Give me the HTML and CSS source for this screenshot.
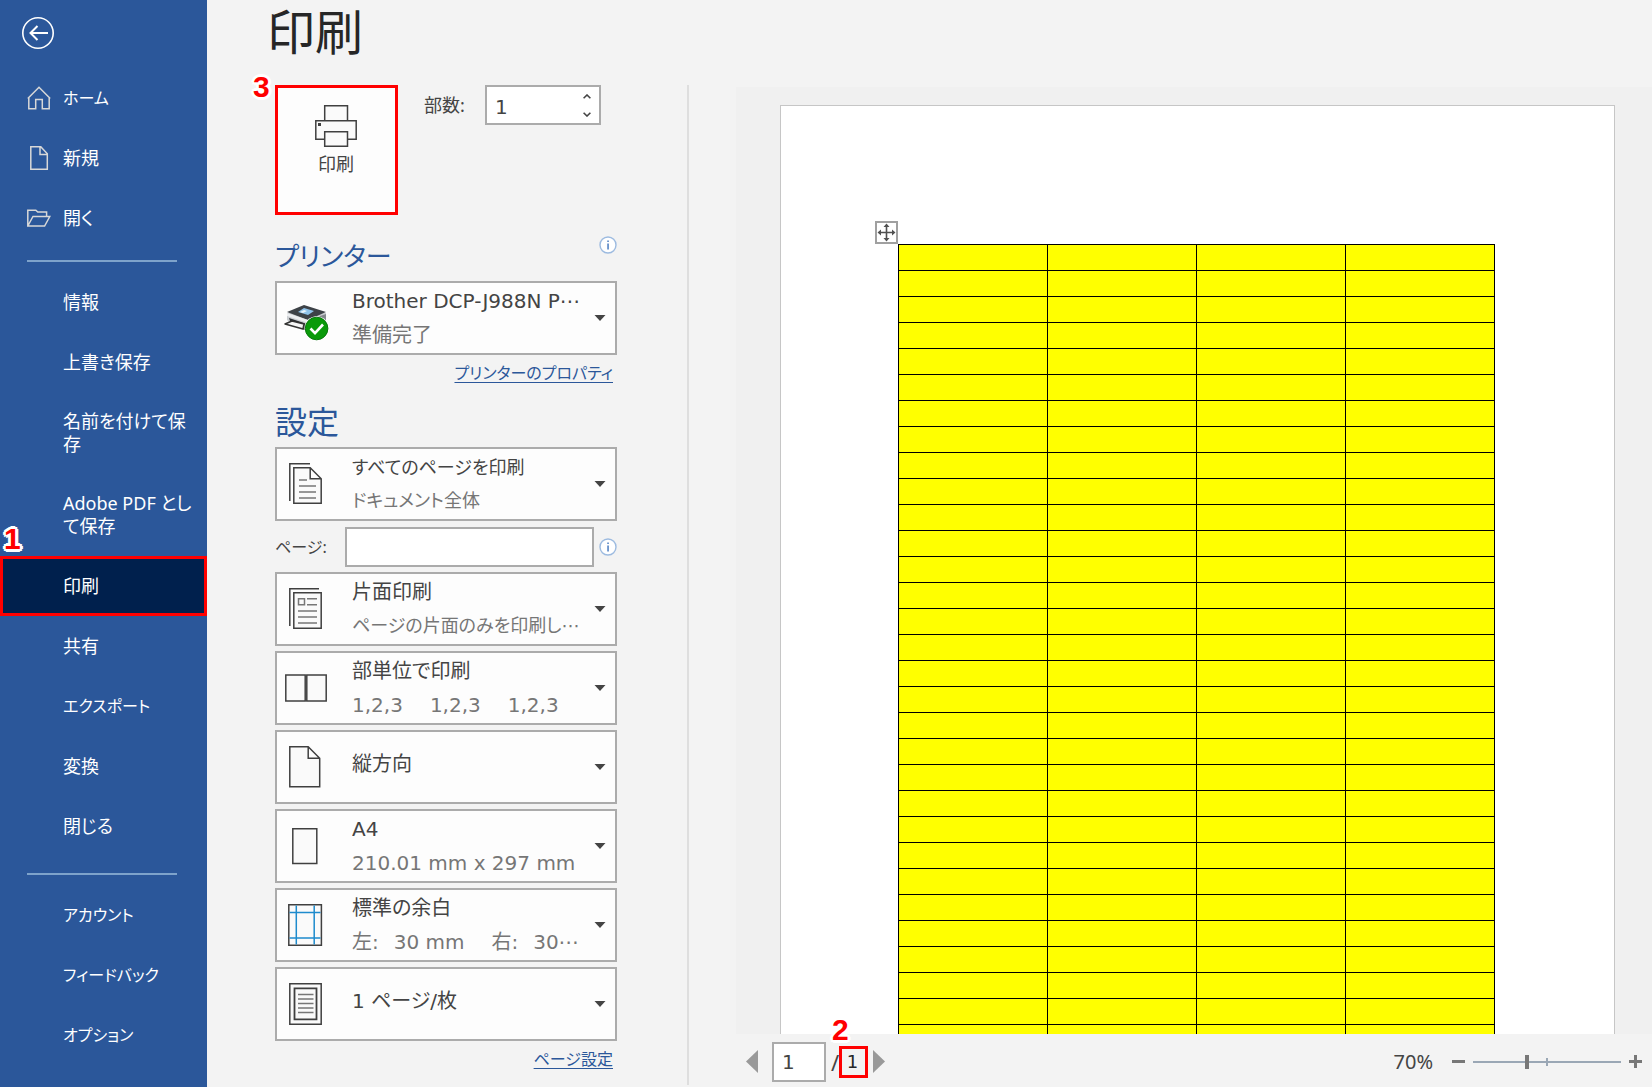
FILE: index.html
```html
<!DOCTYPE html>
<html lang="ja">
<head>
<meta charset="utf-8">
<title>印刷</title>
<meta name="viewport" content="width=device-width, initial-scale=1">
<link rel="stylesheet" href="styles.css">
</head>
<body class="backstage">
<nav class="sidebar" aria-label="ファイル">
  <button class="back" type="button" aria-label="戻る">
    <svg width="32" height="32" viewBox="0 0 32 32" fill="none" stroke="#fff"><circle cx="16" cy="16" r="15.2" stroke-width="1.6"/><path d="M26 16H8.500M15.500 9L8.500 16l7 7" stroke-width="2"/></svg>
  </button>
  <ul class="menu">
    <li><a class="item kana" href="#home"><svg class="item-icon" width="24" height="24" viewBox="0 0 24 24" fill="none" stroke="#d8d8d8" stroke-width="1.500"><path d="M.8 12.500L12 1.300l11.200 11.200M1.800 11.600v11.200h6.900v-9.300h6.600v9.300h6.900V11.600"/></svg>ホーム</a></li>
    <li><a class="item" href="#new"><svg class="item-icon" width="24" height="24" viewBox="0 0 24 24" fill="none" stroke="#d8d8d8" stroke-width="1.500"><path d="M3.800.8h10l6.500 7v15.400H3.800zM13 .8v7.700h7.300"/></svg>新規</a></li>
    <li><a class="item" href="#open"><svg class="item-icon" width="24" height="24" viewBox="0 0 24 24" fill="none" stroke="#d8d8d8" stroke-width="1.500"><path d="M.8 20V4.200h8l2 1.900h8.800v4.400M.8 20L6 10.500h16.800L17.600 20z"/></svg>開く</a></li>
  </ul>
  <hr class="rule">
  <ul class="menu">
    <li><a class="item" href="#info">情報</a></li>
    <li><a class="item" href="#save">上書き保存</a></li>
    <li><a class="item" href="#saveas">名前を付けて保<br>存</a></li>
    <li><a class="item" href="#pdf">Adobe PDF とし<br>て保存</a></li>
    <li class="marked"><a class="item item-current" href="#print" aria-current="page">印刷</a><span class="callout callout-1">1</span></li>
    <li><a class="item" href="#share">共有</a></li>
    <li><a class="item kana" href="#export">エクスポート</a></li>
    <li><a class="item" href="#convert">変換</a></li>
    <li><a class="item" href="#close">閉じる</a></li>
  </ul>
  <hr class="rule rule-low">
  <ul class="menu">
    <li><a class="item kana" href="#account">アカウント</a></li>
    <li><a class="item kana" href="#feedback">フィードバック</a></li>
    <li><a class="item kana" href="#options">オプション</a></li>
  </ul>
</nav>
<main class="content">
  <h1 class="title">印刷</h1>
  <div class="panes">
    <section class="settings">
      <div class="top">
        <div class="marked">
          <button class="print" type="button">
            <svg width="42" height="42" viewBox="0 0 42 42" fill="#fafafa" stroke="#404040" stroke-width="1.500"><path d="M9.700.8h22.800v15H9.700z"/><path d="M.8 15.800h40.400v18.400H.8z"/><path d="M9.700 26.700h22.800v14.500H9.700z"/><path d="M3 18h3v3H3z" fill="#404040" stroke="none"/></svg>
            <span>印刷</span>
          </button>
          <span class="callout callout-3">3</span>
        </div>
        <label class="label copies-label" for="copies">部数:</label>
        <div class="copies">
          <input id="copies" class="number" type="number" value="1" min="1">
          <div class="spin">
            <button class="step" type="button" aria-label="増やす"><svg width="8" height="5" viewBox="0 0 8 5" fill="none" stroke="#444" stroke-width="1.600"><path d="M.6 4.300L4 1l3.400 3.300"/></svg></button>
            <button class="step" type="button" aria-label="減らす"><svg width="8" height="5" viewBox="0 0 8 5" fill="none" stroke="#444" stroke-width="1.600"><path d="M.6.700L4 4 7.400.700"/></svg></button>
          </div>
        </div>
      </div>

      <div class="section-head">
        <h2 class="heading heading-kana">プリンター</h2>
        <svg class="info" width="18" height="18" viewBox="0 0 18 18"><circle cx="9" cy="9" r="8" fill="#fff" stroke="#9dbbe0" stroke-width="1.400"/><path d="M8.300 7.400h1.500v6H8.300zM8.300 4.500h1.500v1.500H8.300z" fill="#4a7cc0"/></svg>
      </div>
      <div class="combo">
        <select class="combo-select" aria-label="プリンター"><option>Brother DCP-J988N P⋯</option></select>
        <svg class="combo-icon" width="46" height="46" viewBox="0 0 46 46">
          <path d="M4 18v7l3 3 18 6 18-8v-8z" fill="#c9ccd0"/>
          <path d="M25 25l18-6v8l-18 7z" fill="#85898e"/>
          <path d="M4 17l17-7 22 7-18 8z" fill="#3d4247"/>
          <path d="M15 17l6-4 10 3-6 4z" fill="#8fc3ea"/>
          <path d="M17 17l4-2 3 1-4 2z" fill="#e8f4fc"/>
          <path d="M4 18l21 7v3L4 21z" fill="#eceef0"/>
          <path d="M6 23l18 6v7L8 29z" fill="#2d3034"/>
          <path d="M2 29l7-3 12 3-1 5z" fill="#f6f6f6" stroke="#333" stroke-width="1.500" stroke-linejoin="round"/>
          <circle cx="33.600" cy="33.500" r="12.200" fill="#fff"/><circle cx="33.600" cy="33.500" r="11.300" fill="#0a9a0a" stroke="#08780c"/>
          <path d="M27.500 33.500l4.500 4.700 8-8.700" fill="none" stroke="#fff" stroke-width="2.600"/>
        </svg>
        <span class="combo-sub">準備完了</span>
        <svg class="arrow" width="12" height="6" viewBox="0 0 12 6"><path d="M.5 0h11L6 6z" fill="#444"/></svg>
      </div>
      <a class="link kana" href="#properties">プリンターのプロパティ</a>

      <div class="section-head section-head-2"><h2 class="heading">設定</h2></div>
      <div class="stack">
        <div class="combo combo-kana">
          <select class="combo-select" aria-label="印刷範囲"><option>すべてのページを印刷</option></select>
          <svg class="combo-icon" width="46" height="46" viewBox="0 0 46 46" fill="none" stroke="#404040" stroke-width="1.500"><path d="M6.800 40V2.800H27"/><path d="M10.800 6.800h16.400l11 11v24.400H10.800zM27.200 6.800v11h11" fill="#fafafa"/><path d="M16 19h8M16 25h17M16 31h17M16 37h17" stroke="#777"/></svg>
          <span class="combo-sub">ドキュメント全体</span>
          <svg class="arrow" width="12" height="6" viewBox="0 0 12 6"><path d="M.5 0h11L6 6z" fill="#444"/></svg>
        </div>
        <div class="pages">
          <label class="label kana" for="pages">ページ:</label>
          <input id="pages" class="field" type="text">
          <svg class="info" width="18" height="18" viewBox="0 0 18 18"><circle cx="9" cy="9" r="8" fill="#fff" stroke="#9dbbe0" stroke-width="1.400"/><path d="M8.300 7.400h1.500v6H8.300zM8.300 4.500h1.500v1.500H8.300z" fill="#4a7cc0"/></svg>
        </div>
        <div class="combo">
          <select class="combo-select" aria-label="両面印刷"><option>片面印刷</option></select>
          <svg class="combo-icon" width="46" height="46" viewBox="0 0 46 46" fill="none" stroke="#404040" stroke-width="1.500"><path d="M6.800 40V2.800H36"/><path d="M10.800 6.800h27.400v35.400H10.800z" fill="#fafafa"/><path d="M15.500 12.800h6v6h-6zM24 12.800h10M24 18.800h10M15 25h19M15 31h19M15 37h19" stroke="#777"/></svg>
          <span class="combo-sub combo-sub-kana">ページの片面のみを印刷し⋯</span>
          <svg class="arrow" width="12" height="6" viewBox="0 0 12 6"><path d="M.5 0h11L6 6z" fill="#444"/></svg>
        </div>
        <div class="combo">
          <select class="combo-select" aria-label="印刷単位"><option>部単位で印刷</option></select>
          <svg class="combo-icon" width="46" height="46" viewBox="0 0 46 46" fill="#fafafa" stroke="#404040" stroke-width="1.500"><path d="M2.800 10h19.400v26H2.800zM23.800 10h19.400v26H23.800z"/></svg>
          <span class="combo-sub combo-sets"><span>1,2,3</span><span>1,2,3</span><span>1,2,3</span></span>
          <svg class="arrow" width="12" height="6" viewBox="0 0 12 6"><path d="M.5 0h11L6 6z" fill="#444"/></svg>
        </div>
        <div class="combo">
          <select class="combo-select combo-single" aria-label="印刷の向き"><option>縦方向</option></select>
          <svg class="combo-icon" width="46" height="46" viewBox="0 0 46 46" fill="#fafafa" stroke="#404040" stroke-width="1.500"><path d="M6.800 2.800h18.400l11.500 11.500v28.500H6.800zM25.200 2.800v11.500h11.500"/></svg>
          <svg class="arrow" width="12" height="6" viewBox="0 0 12 6"><path d="M.5 0h11L6 6z" fill="#444"/></svg>
        </div>
        <div class="combo">
          <select class="combo-select" aria-label="用紙サイズ"><option>A4</option></select>
          <svg class="combo-icon" width="46" height="46" viewBox="0 0 46 46" fill="#fafafa" stroke="#404040" stroke-width="1.500"><path d="M9.800 5.800h24v34.700h-24z"/></svg>
          <span class="combo-sub">210.01 mm x 297 mm</span>
          <svg class="arrow" width="12" height="6" viewBox="0 0 12 6"><path d="M.5 0h11L6 6z" fill="#444"/></svg>
        </div>
        <div class="combo">
          <select class="combo-select" aria-label="余白"><option>標準の余白</option></select>
          <svg class="combo-icon" width="46" height="46" viewBox="0 0 46 46" fill="none" stroke="#404040" stroke-width="1.500"><path d="M5.800 2.800h32.600v40.400H5.800z" fill="#fafafa"/><path d="M13.300 3.500v39M31.200 3.500v39M6.500 10.500h31M6.500 36h31" stroke="#1e8bcd"/></svg>
          <span class="combo-sub combo-margins"><span>左:</span><span>30 mm</span><span class="margin-next">右:</span><span>30⋯</span></span>
          <svg class="arrow" width="12" height="6" viewBox="0 0 12 6"><path d="M.5 0h11L6 6z" fill="#444"/></svg>
        </div>
        <div class="combo">
          <select class="combo-select combo-single" aria-label="1枚あたりのページ数"><option>1 ページ/枚</option></select>
          <svg class="combo-icon" width="46" height="46" viewBox="0 0 46 46" fill="#fafafa" stroke="#404040" stroke-width="1.500"><path d="M6.800 2.800h31.400v40.400H6.800z"/><path d="M11.500 7.300h22v31h-22z" stroke-width="1.800"/><path d="M15 13.500h15.500M15 18h15.500M15 22.500h15.500M15 27h15.500M15 31.500h15.500" stroke="#777"/></svg>
          <svg class="arrow" width="12" height="6" viewBox="0 0 12 6"><path d="M.5 0h11L6 6z" fill="#444"/></svg>
        </div>
      </div>
      <a class="link kana" href="#pagesetup">ページ設定</a>
    </section>

    <section class="preview" aria-label="印刷プレビュー">
      <div class="canvas">
        <div class="sheet">
          <div class="marked">
            <svg class="handle" width="23" height="23" viewBox="0 0 23 23"><path d="M1 1h21v21H1z" fill="#fff" stroke="#a0a0a0" stroke-width="2"/><path d="M11.500 4v15M4 11.500h15" stroke="#505050" stroke-width="1.600"/><path d="M11.500 2.500L14.500 6h-6zM11.500 20.500l3-3.500h-6zM2.500 11.500L6 8.500v6zM20.500 11.500L17 8.500v6z" fill="#505050"/></svg>
            <table class="grid" aria-label="文書の表"><tbody id="rows"></tbody></table>
          </div>
        </div>
      </div>
      <div class="status">
        <button class="page-step" type="button" aria-label="前のページ"><svg width="12" height="23" viewBox="0 0 12 23"><path d="M12 0v23L0 11.500z" fill="#999"/></svg></button>
        <input class="field page-field" type="text" value="1" aria-label="現在のページ">
        <span class="slash">/</span>
        <span class="marked page-total">1<span class="callout callout-2">2</span></span>
        <button class="page-step" type="button" aria-label="次のページ"><svg width="12" height="23" viewBox="0 0 12 23"><path d="M0 0v23l12-11.500z" fill="#999"/></svg></button>
        <label class="zoom-value" for="zoom">70%</label>
        <button class="zoom-step" type="button" aria-label="縮小"><svg width="13" height="13" viewBox="0 0 13 13"><path d="M0 5h13v3H0z" fill="#777"/></svg></button>
        <span class="marked zoom-track"><input id="zoom" class="zoom" type="range" min="0" max="100" value="36"></span>
        <button class="zoom-step" type="button" aria-label="拡大"><svg width="13" height="13" viewBox="0 0 13 13"><path d="M0 5h13v3H0zM5 0h3v13H5z" fill="#777"/></svg></button>
      </div>
    </section>
  </div>
</main>
<script src="rows.js"></script>
</body>
</html>
```
FILE: rows.js
```js
const body = document.getElementById('rows');
for (let r = 0; r < 42; r++) {
  const row = body.insertRow();
  for (let c = 0; c < 4; c++) row.insertCell();
}
```
FILE: styles.css
```css
* { box-sizing: border-box; }

.backstage {
  margin: 0;
  min-height: 100vh;
  display: grid;
  grid-template-columns: 207px minmax(0, 1fr);
  background: #f3f3f3;
  color: #444;
  font-family: "Noto Sans", "Noto Sans CJK JP", sans-serif;
  font-size: 18px;
  font-feature-settings: "palt";
}

button, input, select { font: inherit; font-feature-settings: inherit; color: inherit; margin: 0; }
button { padding: 0; border: 0; background: none; }
svg { display: block; flex: none; }
.kana { font-size: 16px; }

/* Sidebar */
.sidebar { background: #2b579a; color: #fff; }
.back { display: block; margin: 17px 0 19px 22px; }
.menu { list-style: none; margin: 0; padding: 0; }
.item {
  display: flex;
  align-items: center;
  min-height: 60px;
  padding: 7px 8px 7px 63px;
  line-height: 23px;
  color: #fff;
  text-decoration: none;
}
.item:has(br) { min-height: 82px; }
.item-icon { margin: 0 12px 0 -36px; }
.item-current { background: #00204d; box-shadow: inset 0 0 0 3px #f00; }
.rule { height: 2px; margin: 12px 30px 10px 27px; border: 0; background: #7ea3cb; }
.rule-low { margin-top: 17px; }

/* Numbered callouts */
.marked { position: relative; }
.callout {
  position: absolute;
  color: #f00;
  font: bold 30px/30px "Liberation Sans", sans-serif;
  text-shadow: -2px -2px #fff, 2px -2px #fff, -2px 2px #fff, 2px 2px #fff, 0 -3px #fff, 0 3px #fff, -3px 0 #fff, 3px 0 #fff;
}
.callout-1 { left: 4px; top: -32px; }
.callout-2 { left: -10px; top: -34px; }
.callout-3 { left: -22px; top: -13px; }

/* Main area */
.content { display: flex; flex-direction: column; }
.title { margin: 0 0 0 60px; padding-bottom: 21px; font-size: 48px; line-height: 64px; font-weight: 400; color: #262626; }
.panes { flex: 1; display: flex; }
.settings { width: 342px; margin-left: 68px; margin-right: 70px; flex: none; }
.top { display: flex; align-items: flex-start; }
.print {
  display: flex;
  flex-direction: column;
  align-items: center;
  justify-content: flex-start;
  gap: 4px;
  width: 123px;
  height: 130px;
  padding: 17px 1px 0 0;
  border: 3px solid #f00;
  background: #fdfdfd;
  line-height: 26px;
}
.label { line-height: 40px; }
.copies-label { margin-left: 26px; flex: 1; }
.copies { display: flex; width: 116px; height: 40px; margin-right: 16px; border: 2px solid #ababab; background: #fff; }
.number { flex: 1; min-width: 0; border: 0; padding: 3px 0 0 8px; background: none; font-family: "DejaVu Sans", sans-serif; font-size: 20px; outline: 0; appearance: textfield; }
.number::-webkit-inner-spin-button { appearance: none; display: none; }
.spin { display: flex; flex-direction: column; width: 24px; }
.step { flex: 1; display: grid; place-items: center; }

.section-head { display: flex; justify-content: space-between; margin-top: 21px; height: 45px; }
.section-head-2 { margin-top: 13px; height: 47px; }
.heading { margin: 0; font-size: 32px; line-height: 40px; font-weight: 400; color: #2b579a; }
.heading-kana { font-size: 26px; }
.section-head-2 .heading { line-height: 44px; }

.combo {
  display: grid;
  grid-template: 35px 35px / 75px minmax(0, 1fr) 21px;
  align-items: center;
  border: 2px solid #ababab;
  background: #fdfdfd;
  font-family: "DejaVu Sans", "Noto Sans CJK JP", sans-serif;
  font-size: 20px;
}
.combo-kana { font-size: 18px; }
.combo > * { pointer-events: none; }
.combo .combo-select {
  grid-area: 1 / 1 / 3 / 4;
  pointer-events: auto;
  width: 100%;
  height: 70px;
  padding: 0 30px 34px 75px;
  border: 0;
  background: none;
  appearance: none;
}
.combo .combo-single { padding-bottom: 6px; }
.combo-icon { grid-area: 1 / 1 / 3 / 2; margin-left: 6px; }
.combo-sub { grid-area: 2 / 2; align-self: start; line-height: 34px; color: #767676; white-space: nowrap; }
.combo-sub-kana { font-size: 18px; }
.combo-sets { display: flex; gap: 27px; }
.combo-margins { display: flex; gap: 15px; }
.margin-next { margin-left: 12px; }
.arrow { grid-area: 1 / 3 / 3 / 4; }

.stack { display: flex; flex-direction: column; gap: 5px; }
.pages { display: flex; align-items: center; justify-content: space-between; padding-top: 1px; }
.pages .label { width: 70px; }
.field { height: 40px; border: 2px solid #ababab; background: #fff; padding: 0 8px; font-family: "DejaVu Sans", sans-serif; font-size: 20px; outline: 0; }
#pages { flex: 1; min-width: 0; margin-right: 5px; }
.link { display: block; width: fit-content; margin: 4px 4px 0 auto; line-height: 28px; color: #2b579a; text-underline-offset: 3px; text-decoration-thickness: 1px; }

/* Preview */
.preview { flex: 1; min-width: 0; display: flex; flex-direction: column; border-left: 2px solid #dedede; margin-bottom: 2px; }
.canvas { flex: 1; contain: size; overflow: hidden; margin: 2px 0 0 47px; padding: 18px 37px 0 44px; background: #f0f0f0; }
.sheet { border: 1px solid #c6c6c6; background: #fff; padding: 138px 119px 138px 117px; }
.handle { position: absolute; left: -23px; top: -23px; }
.grid { width: 100%; table-layout: fixed; border-collapse: collapse; background: #ff0; }
.grid td { height: 26px; padding: 0; border: 1px solid #000; }
.status { display: flex; align-items: center; height: 51px; padding: 4px 10px 0 57px; line-height: 30px; }
.page-field { width: 54px; margin-left: 14px; }
.slash { width: 13px; padding-left: 5px; font-size: 22px; }
.page-total { width: 29px; height: 32px; padding-right: 2px; border: 3px solid #f00; font-family: "DejaVu Sans", sans-serif; line-height: 26px; text-align: center; color: #262626; margin-right: 5px; }
.zoom-value { margin-left: auto; font-size: 20px; }
.zoom-step { margin: 0 8px; }
.zoom-value + .zoom-step { margin-left: 19px; }
.zoom-step:last-child { margin-right: 0; }
.zoom-track { width: 148px; height: 14px; display: flex; }
.zoom-track::after { content: ""; position: absolute; left: 73px; top: 3px; width: 2px; height: 8px; background: #9aa7b5; }
.zoom { width: 100%; height: 14px; appearance: none; background: linear-gradient(#9aa7b5, #9aa7b5) center / 100% 2px no-repeat; }
.zoom::-webkit-slider-thumb { appearance: none; width: 4px; height: 14px; background: #777; }
```
